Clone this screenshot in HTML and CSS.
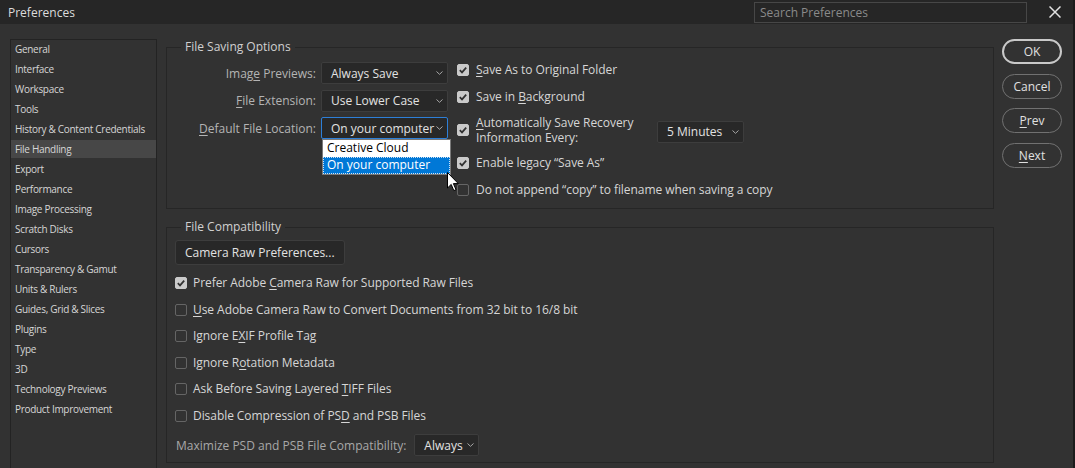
FILE: index.html
```html
<!DOCTYPE html>
<html>
<head>
<meta charset="utf-8">
<title>Preferences</title>
<link rel="stylesheet" href="styles.css">
</head>
<body>
<div class="window">
  <header class="titlebar">
    <span class="title">Preferences</span>
    <div class="search">Search Preferences</div>
    <svg class="close" width="12" height="12" viewBox="0 0 12 12"><path d="M0.5 0.5 L11.5 11.5 M11.5 0.5 L0.5 11.5" stroke="#e2e2e2" stroke-width="1.5" fill="none"/></svg>
  </header>
  <div class="content">
    <nav class="sidebar">
      <div class="nav-item">General</div>
      <div class="nav-item">Interface</div>
      <div class="nav-item">Workspace</div>
      <div class="nav-item">Tools</div>
      <div class="nav-item">History &amp; Content Credentials</div>
      <div class="nav-item active">File Handling</div>
      <div class="nav-item">Export</div>
      <div class="nav-item">Performance</div>
      <div class="nav-item">Image Processing</div>
      <div class="nav-item">Scratch Disks</div>
      <div class="nav-item">Cursors</div>
      <div class="nav-item">Transparency &amp; Gamut</div>
      <div class="nav-item">Units &amp; Rulers</div>
      <div class="nav-item">Guides, Grid &amp; Slices</div>
      <div class="nav-item">Plugins</div>
      <div class="nav-item">Type</div>
      <div class="nav-item">3D</div>
      <div class="nav-item">Technology Previews</div>
      <div class="nav-item">Product Improvement</div>
    </nav>

    <main class="main">
      <fieldset class="group">
        <legend>File Saving Options</legend>
        <div class="saving">
          <div class="saving-left">
            <span class="field-label">Imag<u>e</u> Previews:</span>
            <div class="select"><span>Always Save</span><svg class="chev" width="7" height="4" viewBox="0 0 7 4"><path d="M0.5 0.5 L3.5 3.3 L6.5 0.5" stroke="#a8a8a8" fill="none"/></svg></div>
            <span class="field-label"><u>F</u>ile Extension:</span>
            <div class="select"><span>Use Lower Case</span><svg class="chev" width="7" height="4" viewBox="0 0 7 4"><path d="M0.5 0.5 L3.5 3.3 L6.5 0.5" stroke="#a8a8a8" fill="none"/></svg></div>
            <span class="field-label"><u>D</u>efault File Location:</span>
            <div class="select focused"><span>On your computer</span><svg class="chev" width="7" height="4" viewBox="0 0 7 4"><path d="M0.5 0.5 L3.5 3.3 L6.5 0.5" stroke="#a8a8a8" fill="none"/></svg>
              <div class="popup">
                <div class="popup-item">Creative Cloud</div>
                <div class="popup-item selected">On your computer</div>
              </div>
              <svg class="cursor" width="13" height="20" viewBox="0 0 13 20"><path d="M0.5 0.5 L0.5 16 L4.2 12.4 L6.8 18.6 L9 17.7 L6.4 11.6 L11.3 11.6 Z" fill="#ffffff" stroke="#000000" stroke-width="1" stroke-linejoin="miter"/></svg>
            </div>
          </div>
          <div class="saving-right">
            <div class="check-row"><span class="cb checked"><svg width="12" height="12" viewBox="0 0 12 12"><path d="M2.8 6.2 L5 8.4 L9.2 3.6" stroke="#303030" stroke-width="1.7" fill="none"/></svg></span><span><u>S</u>ave As to Original Folder</span></div>
            <div class="check-row"><span class="cb checked"><svg width="12" height="12" viewBox="0 0 12 12"><path d="M2.8 6.2 L5 8.4 L9.2 3.6" stroke="#303030" stroke-width="1.7" fill="none"/></svg></span><span>Save in <u>B</u>ackground</span></div>
            <div class="check-row recovery"><span class="cb checked"><svg width="12" height="12" viewBox="0 0 12 12"><path d="M2.8 6.2 L5 8.4 L9.2 3.6" stroke="#303030" stroke-width="1.7" fill="none"/></svg></span><span class="two-line"><span class="line"><u>A</u>utomatically Save Recovery</span><span class="line">Information Every:</span></span>
              <div class="select minutes"><span>5 Minutes</span><svg class="chev" width="7" height="4" viewBox="0 0 7 4"><path d="M0.5 0.5 L3.5 3.3 L6.5 0.5" stroke="#a8a8a8" fill="none"/></svg></div>
            </div>
            <div class="check-row"><span class="cb checked"><svg width="12" height="12" viewBox="0 0 12 12"><path d="M2.8 6.2 L5 8.4 L9.2 3.6" stroke="#303030" stroke-width="1.7" fill="none"/></svg></span><span>Enable legacy “Save As”</span></div>
            <div class="check-row"><span class="cb"></span><span>Do not append “copy” to filename when saving a copy</span></div>
          </div>
        </div>
      </fieldset>

      <fieldset class="group">
        <legend>File Compatibility</legend>
        <div class="compat">
          <button class="plain-btn">Camera Raw Preferences...</button>
          <div class="check-row"><span class="cb checked"><svg width="12" height="12" viewBox="0 0 12 12"><path d="M2.8 6.2 L5 8.4 L9.2 3.6" stroke="#303030" stroke-width="1.7" fill="none"/></svg></span><span>Prefer Adobe <u>C</u>amera Raw for Supported Raw Files</span></div>
          <div class="check-row"><span class="cb"></span><span><u>U</u>se Adobe Camera Raw to Convert Documents from 32 bit to 16/8 bit</span></div>
          <div class="check-row"><span class="cb"></span><span>Ignore E<u>X</u>IF Profile Tag</span></div>
          <div class="check-row"><span class="cb"></span><span>Ignore R<u>o</u>tation Metadata</span></div>
          <div class="check-row"><span class="cb"></span><span>Ask Before Saving Layered <u>T</u>IFF Files</span></div>
          <div class="check-row"><span class="cb"></span><span>Disable Compression of PS<u>D</u> and PSB Files</span></div>
          <div class="max-row">
            <span class="max-label">Maximize PSD and PSB File Compatibility:</span>
            <div class="select always"><span>Always</span><svg class="chev" width="7" height="4" viewBox="0 0 7 4"><path d="M0.5 0.5 L3.5 3.3 L6.5 0.5" stroke="#a8a8a8" fill="none"/></svg></div>
          </div>
        </div>
      </fieldset>
    </main>

    <aside class="buttons">
      <button class="pill default">OK</button>
      <button class="pill">Cancel</button>
      <button class="pill"><u>P</u>rev</button>
      <button class="pill"><u>N</u>ext</button>
    </aside>
  </div>
</div>
</body>
</html>
```

FILE: styles.css
```css
* { box-sizing: border-box; }
html, body { margin: 0; padding: 0; }
body {
  background: #323232;
  font-family: "Open Sans", "Noto Sans", sans-serif;
  font-size: 12px;
  color: #d6d6d6;
}
u { text-decoration-thickness: 1px; text-underline-offset: 2px; }

.window {
  width: 1075px;
  height: 468px;
  border-right: 2px solid #1c1c1c;
  overflow: hidden;
  display: flex;
  flex-direction: column;
}

.titlebar {
  height: 24px;
  flex: none;
  background: #262626;
  display: flex;
  align-items: center;
}
.title { padding-left: 8px; color: #dcdcdc; font-size: 12px; }
.search {
  margin-left: auto;
  width: 273px;
  height: 21px;
  border: 1px solid #474747;
  color: #8a8a8a;
  padding-left: 5px;
  line-height: 19px;
}
.close { margin-left: 22px; margin-right: 12px; flex: none; }

.content {
  flex: 1;
  display: flex;
  padding: 15px 0 0 10px;
}

.sidebar {
  width: 147px;
  flex: none;
  border: 1px solid #232323;
  border-bottom: none;
  margin-bottom: -4px;
}
.nav-item {
  height: 18px;
  line-height: 18px;
  margin-bottom: 2px;
  padding-left: 4px;
  font-size: 10px;
  letter-spacing: -0.3px;
  color: #d6d6d6;
  white-space: nowrap;
}
.nav-item.active { background: #474747; }

.main {
  margin-left: 9px;
  width: 828px;
  flex: none;
  display: flex;
  flex-direction: column;
  gap: 10px;
}

.group {
  margin: 0;
  padding: 0;
  border: 1px solid #262626;
  min-inline-size: 0;
}
.group legend {
  margin-left: 14px;
  padding: 0 4px;
  line-height: 16px;
  color: #d0d0d0;
}

.saving {
  display: flex;
  gap: 9px;
  padding: 7px 0 10px 0;
}
.saving-left {
  display: grid;
  grid-template-columns: 149px 127px;
  grid-auto-rows: 22px;
  column-gap: 5px;
  row-gap: 5.5px;
  align-items: center;
  align-content: start;
}
.field-label { text-align: right; color: #b4b4b4; }

.select {
  position: relative;
  height: 22px;
  background: #282828;
  border: 1px solid #3d3d3d;
  border-radius: 2px;
  display: flex;
  align-items: center;
  justify-content: space-between;
  padding: 0 4px 0 9px;
  color: #e2e2e2;
}
.select .chev { flex: none; }
.select.focused { border-color: #2d7fd8; }

.popup {
  position: absolute;
  left: 0;
  top: 21px;
  width: 129px;
  background: #ffffff;
  border: 1px solid #7a7a7a;
  z-index: 5;
}
.popup-item {
  height: 17px;
  line-height: 16px;
  padding-left: 4px;
  color: #000000;
}
.popup-item.selected {
  background: #0078d7;
  color: #ffffff;
  outline: 1px dotted #cfe3f7;
  outline-offset: -1px;
}
.cursor {
  position: absolute;
  left: 125px;
  top: 54px;
  z-index: 6;
}

.saving-right {
  display: flex;
  flex-direction: column;
  gap: 11px;
}
.check-row {
  display: flex;
  align-items: center;
  gap: 6px;
  height: 16px;
  line-height: 16px;
  color: #d6d6d6;
  white-space: nowrap;
  letter-spacing: -0.06px;
}
.saving-right .check-row { gap: 7px; }
.check-row.recovery { height: 28px; }
.two-line {
  display: flex;
  flex-direction: column;
  width: 174px;
  height: 28px;
  justify-content: space-between;
}
.two-line .line { line-height: 13px; height: 13px; }
.select.minutes { width: 87px; margin-top: 4px; letter-spacing: 0; }

.cb {
  width: 12px;
  height: 12px;
  flex: none;
  border: 1px solid #656565;
  border-radius: 2px;
  display: flex;
}
.cb.checked { background: #cacaca; border-color: #cacaca; }
.cb svg { margin: -1px; }

.compat {
  display: flex;
  flex-direction: column;
  align-items: flex-start;
  gap: 10.5px;
  padding: 5px 8px 6px 8px;
}
.plain-btn {
  height: 25px;
  padding: 0 9px;
  background: #282828;
  border: 1px solid #3d3d3d;
  border-radius: 3px;
  color: #e2e2e2;
  font: inherit;
  margin-bottom: -0.5px;
}
.max-row {
  display: flex;
  align-items: center;
  gap: 8px;
  padding-left: 1px;
}
.max-label { color: #a8a8a8; }
.select.always { width: 65px; }

.buttons {
  margin-left: 8px;
  width: 60px;
  flex: none;
  display: flex;
  flex-direction: column;
  gap: 9.5px;
}
.pill {
  height: 25px;
  width: 60px;
  border-radius: 13px;
  background: transparent;
  border: 1.5px solid #717171;
  color: #e0e0e0;
  font: inherit;
  padding: 0;
}
.pill.default { border: 2px solid #c9c9c9; }
```
